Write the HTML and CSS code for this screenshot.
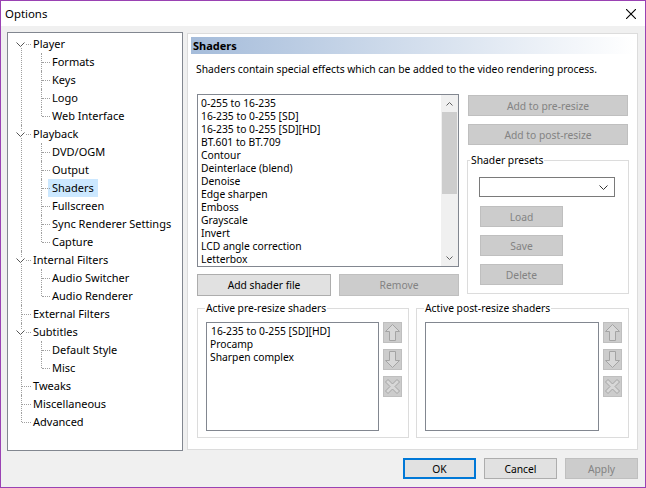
FILE: index.html
```html
<!DOCTYPE html>
<html lang="en">
<head>
  <meta charset="UTF-8" />
  <title>Options</title>
  <link rel="stylesheet" href="styles.css">
</head>
<body>
  <div class="window">
    <div class="titlebar">
      <span>Options</span>
      <svg class="close" width="10" height="10" viewBox="0 0 10 10"><path d="M0 0L10 10M10 0L0 10" stroke="#000" stroke-width="1.1"/></svg>
    </div>

    <div class="main">
      <div class="tree-box">
        <ul class="tree">
          <li><div class="row"><svg class="chev" width="9" height="5" viewBox="0 0 9 5"><path d="M0.5 0.5L4.5 4.5L8.5 0.5" fill="none" stroke="#555"/></svg><span>Player</span></div>
            <ul class="sub">
              <li><div class="row"><span>Formats</span></div></li>
              <li><div class="row"><span>Keys</span></div></li>
              <li><div class="row"><span>Logo</span></div></li>
              <li><div class="row"><span>Web Interface</span></div></li>
            </ul>
          </li>
          <li><div class="row"><svg class="chev" width="9" height="5" viewBox="0 0 9 5"><path d="M0.5 0.5L4.5 4.5L8.5 0.5" fill="none" stroke="#555"/></svg><span>Playback</span></div>
            <ul class="sub">
              <li><div class="row"><span>DVD/OGM</span></div></li>
              <li><div class="row"><span>Output</span></div></li>
              <li><div class="row"><span class="selected">Shaders</span></div></li>
              <li><div class="row"><span>Fullscreen</span></div></li>
              <li><div class="row"><span>Sync Renderer Settings</span></div></li>
              <li><div class="row"><span>Capture</span></div></li>
            </ul>
          </li>
          <li><div class="row"><svg class="chev" width="9" height="5" viewBox="0 0 9 5"><path d="M0.5 0.5L4.5 4.5L8.5 0.5" fill="none" stroke="#555"/></svg><span>Internal Filters</span></div>
            <ul class="sub">
              <li><div class="row"><span>Audio Switcher</span></div></li>
              <li><div class="row"><span>Audio Renderer</span></div></li>
            </ul>
          </li>
          <li><div class="row"><span>External Filters</span></div></li>
          <li><div class="row"><svg class="chev" width="9" height="5" viewBox="0 0 9 5"><path d="M0.5 0.5L4.5 4.5L8.5 0.5" fill="none" stroke="#555"/></svg><span>Subtitles</span></div>
            <ul class="sub">
              <li><div class="row"><span>Default Style</span></div></li>
              <li><div class="row"><span>Misc</span></div></li>
            </ul>
          </li>
          <li><div class="row"><span>Tweaks</span></div></li>
          <li><div class="row"><span>Miscellaneous</span></div></li>
          <li><div class="row"><span>Advanced</span></div></li>
        </ul>
      </div>

      <div class="page">
        <div class="page-head">Shaders</div>
        <p class="page-desc">Shaders contain special effects which can be added to the video rendering process.</p>

        <div class="content">
          <div class="top-row">
            <div class="list-col">
              <div class="listbox shader-list">
                <div class="items">
                  <div>0-255 to 16-235</div>
                  <div>16-235 to 0-255 [SD]</div>
                  <div>16-235 to 0-255 [SD][HD]</div>
                  <div>BT.601 to BT.709</div>
                  <div>Contour</div>
                  <div>Deinterlace (blend)</div>
                  <div>Denoise</div>
                  <div>Edge sharpen</div>
                  <div>Emboss</div>
                  <div>Grayscale</div>
                  <div>Invert</div>
                  <div>LCD angle correction</div>
                  <div>Letterbox</div>
                </div>
                <div class="vscroll">
                  <div class="sb-arrow"><svg width="7" height="4" viewBox="0 0 7 4"><path d="M0.5 3.5L3.5 0.5L6.5 3.5" fill="none" stroke="#606060"/></svg></div>
                  <div class="sb-track"><div class="sb-thumb"></div></div>
                  <div class="sb-arrow"><svg width="7" height="4" viewBox="0 0 7 4"><path d="M0.5 0.5L3.5 3.5L6.5 0.5" fill="none" stroke="#606060"/></svg></div>
                </div>
              </div>
              <div class="btn-row">
                <button class="btn add-file">Add shader file</button>
                <button class="btn remove" disabled>Remove</button>
              </div>
            </div>

            <div class="side-col">
              <button class="btn side-btn" disabled>Add to pre-resize</button>
              <button class="btn side-btn" disabled>Add to post-resize</button>
              <fieldset class="group presets">
                <legend>Shader presets</legend>
                <div class="presets-body">
                  <div class="combo">
                    <svg width="9" height="5" viewBox="0 0 9 5"><path d="M0.5 0.5L4.5 4.5L8.5 0.5" fill="none" stroke="#333"/></svg>
                  </div>
                  <button class="btn preset-btn" disabled>Load</button>
                  <button class="btn preset-btn" disabled>Save</button>
                  <button class="btn preset-btn" disabled>Delete</button>
                </div>
              </fieldset>
            </div>
          </div>

          <div class="bottom-row">
            <fieldset class="group active pre">
              <legend>Active pre-resize shaders</legend>
              <div class="active-body">
                <div class="listbox active-list">
                  <div class="items">
                    <div class="first">16-235 to 0-255 [SD][HD]</div>
                    <div>Procamp</div>
                    <div>Sharpen complex</div>
                  </div>
                </div>
                <div class="move-btns">
                  <button class="btn move-btn" disabled><svg width="15" height="17" viewBox="0 0 15 17"><path d="M7.5 0.5L14.5 7.5L10.5 7.5L10.5 16.5L4.5 16.5L4.5 7.5L0.5 7.5Z" fill="#d8d8d8" stroke="#a4a4a4"/></svg></button>
                  <button class="btn move-btn" disabled><svg width="15" height="17" viewBox="0 0 15 17"><path d="M7.5 16.5L14.5 9.5L10.5 9.5L10.5 0.5L4.5 0.5L4.5 9.5L0.5 9.5Z" fill="#d8d8d8" stroke="#a4a4a4"/></svg></button>
                  <button class="btn move-btn" disabled><svg width="15" height="15" viewBox="0 0 15 15"><path d="M3 0.5L7.5 5L12 0.5L14.5 3L10 7.5L14.5 12L12 14.5L7.5 10L3 14.5L0.5 12L5 7.5L0.5 3Z" fill="#d8d8d8" stroke="#a4a4a4"/></svg></button>
                </div>
              </div>
            </fieldset>

            <fieldset class="group active post">
              <legend>Active post-resize shaders</legend>
              <div class="active-body">
                <div class="listbox active-list"></div>
                <div class="move-btns">
                  <button class="btn move-btn" disabled><svg width="15" height="17" viewBox="0 0 15 17"><path d="M7.5 0.5L14.5 7.5L10.5 7.5L10.5 16.5L4.5 16.5L4.5 7.5L0.5 7.5Z" fill="#d8d8d8" stroke="#a4a4a4"/></svg></button>
                  <button class="btn move-btn" disabled><svg width="15" height="17" viewBox="0 0 15 17"><path d="M7.5 16.5L14.5 9.5L10.5 9.5L10.5 0.5L4.5 0.5L4.5 9.5L0.5 9.5Z" fill="#d8d8d8" stroke="#a4a4a4"/></svg></button>
                  <button class="btn move-btn" disabled><svg width="15" height="15" viewBox="0 0 15 15"><path d="M3 0.5L7.5 5L12 0.5L14.5 3L10 7.5L14.5 12L12 14.5L7.5 10L3 14.5L0.5 12L5 7.5L0.5 3Z" fill="#d8d8d8" stroke="#a4a4a4"/></svg></button>
                </div>
              </div>
            </fieldset>
          </div>
        </div>
      </div>
    </div>

    <div class="footer">
      <button class="btn foot-btn default">OK</button>
      <button class="btn foot-btn">Cancel</button>
      <button class="btn foot-btn" disabled>Apply</button>
    </div>
  </div>
</body>
</html>
```

FILE: styles.css
```css
body {
  margin: 0;
  font-family: "Noto Sans", sans-serif;
  font-size: 11px;
  color: #000;
}

.window {
  width: 646px;
  height: 488px;
  box-sizing: border-box;
  border: 1px solid #9a42b3;
  background: #f0f0f0;
  display: flex;
  flex-direction: column;
}

.titlebar {
  height: 25px;
  flex: none;
  background: #fff;
  display: flex;
  align-items: center;
  justify-content: space-between;
  padding: 0 9px 0 4px;
  font-size: 11.4px;
}

.main {
  display: flex;
  gap: 4px;
  padding: 6px 7px 0 6px;
  flex: none;
}

/* tree */
.tree-box {
  width: 176px;
  height: 419px;
  box-sizing: border-box;
  border: 1px solid #828790;
  background: #fff;
}

.tree, .sub {
  list-style: none;
  margin: 0;
  padding: 0;
}

.tree { padding-top: 2px; }

.tree li { position: relative; }

.tree > li::before, .sub > li::before {
  content: '';
  position: absolute;
  top: 0;
  bottom: 0;
  left: 13px;
  border-left: 1px dotted #a0a0a0;
}

.sub > li::before { left: 33px; }

.tree > li:first-child::before { top: 9px; }
.tree > li:last-child::before, .sub > li:last-child::before {
  bottom: auto;
  height: 9px;
}

.row {
  position: relative;
  height: 18px;
  line-height: 18px;
  padding-left: 25px;
  white-space: nowrap;
}

.row::after {
  content: '';
  position: absolute;
  left: 14px;
  top: 9px;
  width: 9px;
  border-top: 1px dotted #a0a0a0;
}

.sub .row { padding-left: 44px; }
.sub .row::after { left: 34px; width: 8px; }

.chev {
  position: absolute;
  left: 8px;
  top: 7px;
  z-index: 1;
  background: #fff;
  padding: 1px 0;
  margin-top: -1px;
}

.row span { display: inline-block; }

.row .selected {
  background: #cce8ff;
  padding: 0 4px;
  margin-left: -4px;
}

/* page */
.page {
  width: 451px;
  height: 417px;
  margin-top: 1px;
  box-sizing: border-box;
  border: 1px solid #dcdcdc;
  background: #fff;
  padding: 3px 3px 0;
  font-size: 10.3px;
}

.page-head {
  height: 17px;
  line-height: 17px;
  padding-left: 2px;
  font-size: 11px;
  font-weight: bold;
  background: linear-gradient(to right, #a5bcda, #fff);
}

.page-desc {
  margin: 8px 0 0 5px;
  line-height: 15px;
}

.content { margin-left: 6px; }

.top-row {
  display: flex;
  gap: 8px;
  margin-top: 17px;
}

.list-col { width: 262px; }

.listbox {
  box-sizing: border-box;
  border: 1px solid #828790;
  background: #fff;
}

.shader-list {
  height: 173px;
  display: flex;
}

.items {
  flex: 1;
  padding: 2px 3px;
  line-height: 13px;
  white-space: nowrap;
  overflow: hidden;
}

.vscroll {
  width: 17px;
  background: #f0f0f0;
  display: flex;
  flex-direction: column;
}

.sb-arrow {
  height: 17px;
  display: flex;
  align-items: center;
  justify-content: center;
}

.sb-track { flex: 1; }

.sb-thumb {
  height: 82px;
  margin: 0 1px;
  background: #cdcdcd;
}

.btn {
  box-sizing: border-box;
  border: 1px solid #adadad;
  background: #e1e1e1;
  color: #000;
  font: inherit;
  padding: 0;
}

.btn:disabled {
  background: #cccccc;
  border-color: #bfbfbf;
  color: #838383;
}

.btn-row {
  display: flex;
  gap: 8px;
  margin-top: 7px;
}

.btn-row .btn { height: 22px; }
.add-file { width: 134px; }
.remove { width: 120px; }

.side-col {
  width: 162px;
  margin-top: 1px;
}

.side-btn {
  display: block;
  width: 160px;
  height: 21px;
  margin: 0 0 8px 1px;
}

.group {
  box-sizing: border-box;
  margin: 0;
  padding: 0;
  min-width: 0;
  border: 1px solid #dcdcdc;
}

.group legend {
  margin-left: 2px;
  padding: 0 1px;
  line-height: 15px;
}

.presets-body { padding: 9px 0 8px 11px; }

.combo {
  width: 136px;
  height: 20px;
  box-sizing: border-box;
  border: 1px solid #7a7a7a;
  margin-bottom: 9px;
  display: flex;
  align-items: center;
  justify-content: flex-end;
  padding-right: 6px;
}

.preset-btn {
  display: block;
  width: 83px;
  height: 21px;
  margin: 0 0 8px 1px;
}

.preset-btn:last-child { margin-bottom: 0; }

.bottom-row {
  display: flex;
  gap: 7px;
  margin-top: 5px;
}

.active.pre { width: 212px; }
.active.post { width: 213px; }

.active legend { margin-left: 7px; }

.active-body {
  display: flex;
  gap: 4px;
  padding: 6px 0 6px 8px;
}

.active-list { height: 109px; }
.pre .active-list { width: 173px; }
.post .active-list { width: 174px; }

.active-list .first { padding-left: 1px; }

.move-btns {
  display: flex;
  flex-direction: column;
  gap: 6px;
}

.move-btn {
  width: 19px;
  height: 21px;
  display: flex;
  align-items: center;
  justify-content: center;
}

.footer {
  display: flex;
  justify-content: flex-end;
  gap: 8px;
  padding: 7px 7px 0 0;
  font-size: 10.3px;
}

.foot-btn {
  width: 73px;
  height: 21px;
}

.foot-btn.default {
  border-color: #0078d7;
  box-shadow: inset 0 0 0 1px #0078d7;
}
```
